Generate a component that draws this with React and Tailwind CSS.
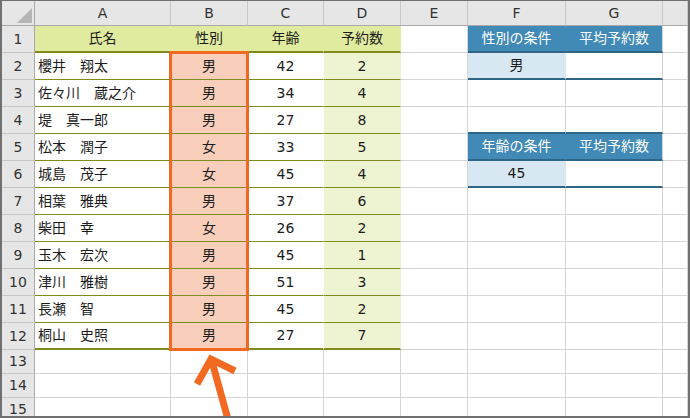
import React from "react";

const people = [
  ["櫻井　翔太", "男", 42, 2],
  ["佐々川　蔵之介", "男", 34, 4],
  ["堤　真一郎", "男", 27, 8],
  ["松本　潤子", "女", 33, 5],
  ["城島　茂子", "女", 45, 4],
  ["相葉　雅典", "男", 37, 6],
  ["柴田　幸", "女", 26, 2],
  ["玉木　宏次", "男", 45, 1],
  ["津川　雅樹", "男", 51, 3],
  ["長瀬　智", "男", 45, 2],
  ["桐山　史照", "男", 27, 7],
];

const cols = ["A", "B", "C", "D", "E", "F", "G", ""];

// plain sheet cell with gray gridlines
const Cell = ({ className = "", children }) => (
  <div
    className={`flex items-center justify-center border-r border-b border-[#d4d4d4] ${className}`}
  >
    {children}
  </div>
);

const RowHead = ({ n }) => (
  <div className="flex items-center justify-center bg-[#e6e6e6] border-r border-r-[#a9a9a9] border-b border-b-[#c8c8c8] text-[#333]">
    {n}
  </div>
);

// right-hand condition tables (F:G)
const condRow = (r) => {
  const dark = "border-b-2 border-b-[#2f6585]";
  if (r === 1 || r === 5) {
    const label = r === 1 ? "性別の条件" : "年齢の条件";
    return [
      <Cell key="f" className={`bg-[#4189b6] text-white border-r-transparent ${dark}`}>
        {label}
      </Cell>,
      <Cell key="g" className={`bg-[#4189b6] text-white ${dark}`}>
        平均予約数
      </Cell>,
    ];
  }
  if (r === 2 || r === 6) {
    return [
      <Cell key="f" className={`bg-[#d8e8f2] border-r-transparent ${dark}`}>
        {r === 2 ? "男" : "45"}
      </Cell>,
      <Cell key="g" className={dark} />,
    ];
  }
  if (r === 4) {
    return [<Cell key="f" className={dark} />, <Cell key="g" className={dark} />];
  }
  return [<Cell key="f" />, <Cell key="g" />];
};

export default function App() {
  const olive = "border-b-[#7f8b1d]";

  return (
    <div
      className="relative w-[690px] h-[418px] overflow-hidden bg-white border-x-2 border-b-2 border-t border-[#6f6f6f] text-[14px] text-[#1c1c1c]"
      style={{ fontFamily: '"DejaVu Sans", "Noto Sans CJK JP", sans-serif' }}
    >
      <div className="grid grid-cols-[33px_136px_77px_76px_77px_67px_98px_97px_1fr] grid-rows-[25px_repeat(12,27px)_repeat(3,24px)]">
        {/* column headers */}
        <div className="relative bg-[#e6e6e6] border-r border-b border-[#a9a9a9]">
          <svg width="33" height="25" className="absolute inset-0">
            <polygon points="15,22 30,7 30,22" fill="#b5b5b5" />
          </svg>
        </div>
        {cols.map((c, i) => (
          <div
            key={i}
            className="flex items-center justify-center bg-[#e6e6e6] border-r border-r-[#c9c9c9] border-b border-b-[#a9a9a9] text-[#333]"
          >
            {c}
          </div>
        ))}

        {/* row 1: table headers */}
        <RowHead n={1} />
        <Cell className={`bg-[#e1eba0] border-r-transparent border-b-2 ${olive}`}>氏名</Cell>
        <Cell className={`bg-[#e1eba0] border-r-transparent border-b-2 ${olive}`}>性別</Cell>
        <Cell className={`bg-[#e1eba0] border-r-transparent border-b-2 ${olive}`}>年齢</Cell>
        <Cell className={`bg-[#e1eba0] border-r-transparent border-b-2 ${olive}`}>予約数</Cell>
        <Cell />
        {condRow(1)}
        <Cell />

        {/* rows 2-12 */}
        {people.map(([name, sex, age, count], i) => {
          const r = i + 2;
          const line = r === 12 ? `border-b-2 ${olive}` : olive;
          return (
            <React.Fragment key={r}>
              <RowHead n={r} />
              <Cell className={`justify-start pl-[3px] border-r-transparent ${line}`}>{name}</Cell>
              <Cell className={`bg-[#f9cfbc] border-r-transparent ${line}`}>{sex}</Cell>
              <Cell className={`border-r-transparent ${line}`}>{age}</Cell>
              <Cell className={`bg-[#eef3d1] border-r-transparent ${line}`}>{count}</Cell>
              <Cell />
              {condRow(r)}
              <Cell />
            </React.Fragment>
          );
        })}

        {/* rows 13-15 */}
        {[13, 14, 15].map((r) => (
          <React.Fragment key={r}>
            <RowHead n={r} />
            {cols.map((_, j) => (
              <Cell key={j} />
            ))}
          </React.Fragment>
        ))}
      </div>

      {/* highlight around B2:B12 */}
      <div className="absolute left-[167px] top-[50px] w-[80px] h-[300px] border-[3px] border-[#f26a22]" />

      {/* arrow */}
      <svg className="absolute left-0 top-0" width="690" height="418">
        <line x1="227" y1="422" x2="209" y2="357" stroke="#f26a22" strokeWidth="7" />
        <polyline
          points="195,383 209,358 233,370"
          fill="none"
          stroke="#f26a22"
          strokeWidth="7"
          strokeLinejoin="miter"
          strokeMiterlimit="10"
        />
      </svg>
    </div>
  );
}
